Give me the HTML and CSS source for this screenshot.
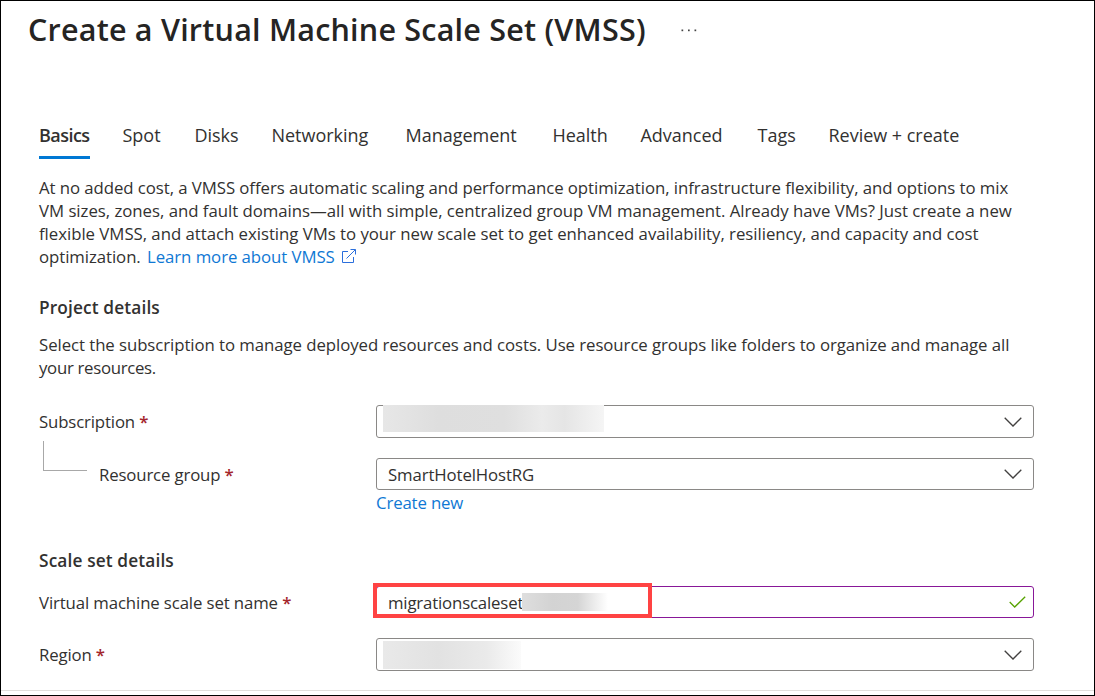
FILE: index.html
```html
<!DOCTYPE html>
<html lang="en">
<head>
<meta charset="utf-8">
<title>Create a Virtual Machine Scale Set (VMSS)</title>
<link rel="stylesheet" href="styles.css">
</head>
<body>
<main class="page">
  <header class="header">
    <h1 class="title">Create a Virtual Machine Scale Set (VMSS)</h1>
    <svg class="more" width="16" height="3" viewBox="0 0 16 3" fill="#444"><rect x="0.5" y="0.5" width="1.7" height="1.7"/><rect x="7" y="0.5" width="1.7" height="1.7"/><rect x="13.5" y="0.5" width="1.7" height="1.7"/></svg>
  </header>
  <nav class="tabs">
    <a class="tab active">Basics</a>
    <a class="tab">Spot</a>
    <a class="tab">Disks</a>
    <a class="tab">Networking</a>
    <a class="tab">Management</a>
    <a class="tab">Health</a>
    <a class="tab">Advanced</a>
    <a class="tab">Tags</a>
    <a class="tab">Review + create</a>
  </nav>
  <p class="text intro">
    <span class="line l1">At no added cost, a VMSS offers automatic scaling and performance optimization, infrastructure flexibility, and options to mix</span>
    <span class="line l2">VM sizes, zones, and fault domains—all with simple, centralized group VM management. Already have VMs? Just create a new</span>
    <span class="line l3">flexible VMSS, and attach existing VMs to your new scale set to get enhanced availability, resiliency, and capacity and cost</span>
    <span class="line l4">optimization. <a class="link learn">Learn more about VMSS</a><svg class="ext" width="14" height="14" viewBox="0 0 14 14" fill="none" stroke="#2b6fdc" stroke-width="1"><path d="M6 2.5H.5V13.5H11.500V8"/><path d="M4.500 9.500L13.300.7M8.500.5H13.500V5.500"/></svg></span>
  </p>
  <h2 class="section">Project details</h2>
  <p class="text about">
    <span class="line l5">Select the subscription to manage deployed resources and costs. Use resource groups like folders to organize and manage all</span>
    <span class="line l6">your resources.</span>
  </p>
  <div class="row subscription">
    <label class="label">Subscription <span class="req">*</span></label>
    <div class="field tall"><span class="redact redact-sub"></span><svg class="chev" width="18" height="10" viewBox="0 0 18 10"><path d="M.7.7L9 9L17.300.7"/></svg></div>
  </div>
  <div class="row group">
    <span class="elbow"></span>
    <label class="label nested">Resource group <span class="req">*</span></label>
    <div class="field"><span class="value rg">SmartHotelHostRG</span><svg class="chev" width="18" height="10" viewBox="0 0 18 10"><path d="M.7.7L9 9L17.300.7"/></svg></div>
  </div>
  <a class="link create">Create new</a>
  <h2 class="section scale">Scale set details</h2>
  <div class="row name">
    <label class="label vm">Virtual machine scale set name <span class="req">*</span></label>
    <div class="field edited"><span class="value ms">migrationscaleset</span><span class="redact redact-name"></span><svg class="check" width="17" height="12" viewBox="0 0 17 12"><path d="M.7 6L5.700 11L16.200.7"/></svg><span class="highlight"></span></div>
  </div>
  <div class="row region">
    <label class="label">Region <span class="req">*</span></label>
    <div class="field tall"><span class="redact redact-region"></span><svg class="chev" width="18" height="10" viewBox="0 0 18 10"><path d="M.7.7L9 9L17.300.7"/></svg></div>
  </div>
  <footer class="footer"></footer>
</main>
</body>
</html>
```
FILE: styles.css
```css
* { box-sizing: border-box; }
body { margin: 0; background: #fff; }
.page {
  width: 1095px; height: 696px; border: 1px solid #000; overflow: hidden;
  display: flex; flex-direction: column; padding: 0 60px 0 38px;
  font-family: "Open Sans", "Noto Sans", sans-serif; font-size: 16.8px; line-height: 23px; color: #323130;
  white-space: nowrap;
}
.header { display: flex; align-items: center; height: 58px; margin-left: -11px; flex: none; }
.title { margin: -2px 0 0; width: 653px; font-size: 30.5px; line-height: 40px; font-weight: 600; letter-spacing: 0.22px; color: #252423; }
.more { display: block; }
.tabs {
  display: grid; grid-template-columns: 84px 72px 77px 134px 147px 88px 117px 71px auto;
  justify-content: start; margin-top: 62px; height: 38px; flex: none;
  font-size: 18px; line-height: 29px;
}
.tab { height: 38px; justify-self: start; letter-spacing: -0.02px; margin-left: -0.5px; }
.active { font-weight: 600; border-bottom: 3px solid #0078d4; width: 51px; letter-spacing: -0.55px; margin-left: 0; }
.text { margin: 0; flex: none; }
.intro { margin-top: 17px; }
.line { display: block; height: 23px; letter-spacing: -0.065px; }
.l2 { letter-spacing: -0.025px; }
.l3 { letter-spacing: -0.03px; }
.l6 { letter-spacing: -0.3px; }
.link { color: #0f78d4; }
.learn { margin-left: 2px; }
.ext { margin-left: 7px; vertical-align: 0; }
.section { margin: 28px 0 0; font-size: 17.3px; line-height: 23px; font-weight: 600; letter-spacing: 0.13px; flex: none; }
.about { margin-top: 14px; }
.row { display: flex; align-items: center; position: relative; flex: none; }
.label { width: 337px; letter-spacing: -0.15px; }
.vm { letter-spacing: -0.12px; }
.req { color: #a4262c; font-weight: 600; }
.field { width: 658px; height: 32px; border: 1px solid #8a8886; border-radius: 3px; display: flex; align-items: center; position: relative; padding: 0 11px; }
.rg { letter-spacing: -0.12px; }
.ms { letter-spacing: -0.17px; }
.tall { height: 33px; }
.chev, .check { margin-left: auto; fill: none; stroke: #424140; stroke-width: 1.3; }
.check { stroke: #57a300; margin-right: -4px; }
.subscription { margin-top: 26px; }
.group { margin-top: 20px; }
.elbow { position: absolute; left: 4px; top: -17px; width: 44px; height: 30px; border: solid #a8a8a8; border-width: 0 0 1px 1px; }
.nested { padding-left: 60px; }
.create { margin-top: 1px; margin-left: 337px; letter-spacing: -0.15px; flex: none; }
.scale { margin-top: 35px; }
.name { margin-top: 14px; }
.region { margin-top: 20px; }
.edited { border-color: #881798; }
.redact { flex: none; }
.redact-sub { position: absolute; left: 6px; top: -1px; width: 221px; height: 27px; background: linear-gradient(90deg, #e7e7e7, #dedede 25%, #dfdfdf 55%, #ebebeb 72%, #e5e5e5 82%, #f5f5f5); }
.redact-name { width: 86px; height: 18px; margin-left: -1px; background: linear-gradient(90deg, #dedede, #d3d3d3 35%, #d5d5d5 65%, #fff); }
.redact-region { position: absolute; left: 6px; top: 2px; width: 138px; height: 28px; background: linear-gradient(90deg, #e9e9e9, #e2e2e2 40%, #eaeaea 75%, #fbfbfb); }
.highlight { position: absolute; left: -4px; top: -4px; width: 279px; height: 35px; border: 4px solid #ff4343; }
.footer { margin: 19px -60px 0 -38px; height: 1px; background: #e1dfdd; flex: none; }
```
